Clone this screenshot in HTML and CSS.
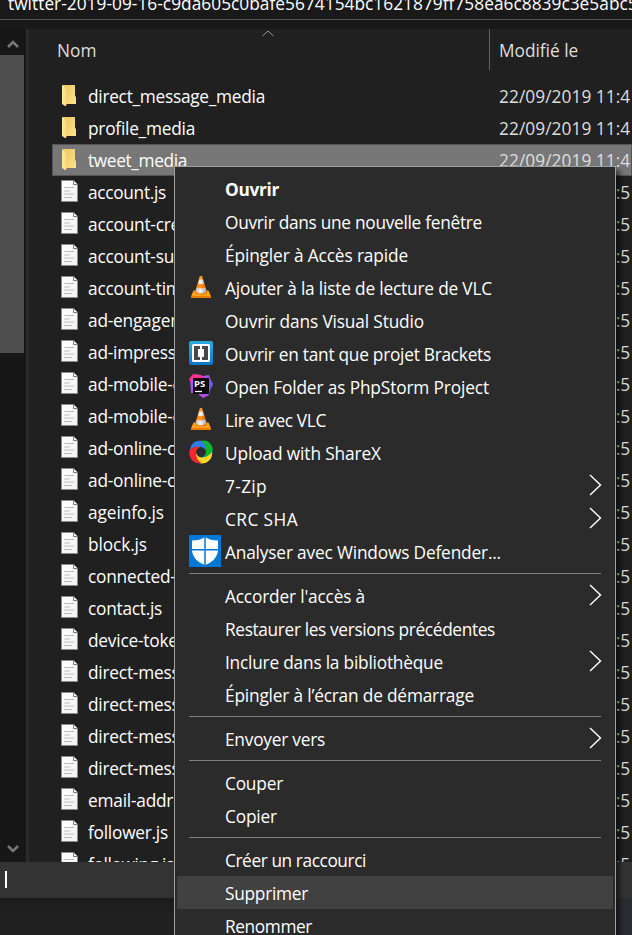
FILE: index.html
```
<!DOCTYPE html>
<html lang="fr">
<head>
<meta charset="utf-8">
<title>Explorateur</title>
<link rel="stylesheet" href="styles.css">
</head>
<body>
<svg class="defs" aria-hidden="true">
  <defs>
    <linearGradient id="gold" x1="0" x2="1" y1="0" y2="1"><stop offset="0" stop-color="#edc15d"/><stop offset="1" stop-color="#ffe68c"/></linearGradient>
    <linearGradient id="goldFront" x1="0" x2="1"><stop offset="0" stop-color="#ffe9a8"/><stop offset="1" stop-color="#f9d476"/></linearGradient>
    <linearGradient id="paper" x1="0" x2="1" y1="0" y2="1"><stop offset="0" stop-color="#fff"/><stop offset="1" stop-color="#f1f1f1"/></linearGradient>
    <linearGradient id="cone" x1="0" x2="1"><stop offset="0" stop-color="#e87808"/><stop offset=".45" stop-color="#ff9a28"/><stop offset="1" stop-color="#d95f00"/></linearGradient>
    <linearGradient id="band" x1="0" x2="1"><stop offset="0" stop-color="#b9b9b9"/><stop offset=".45" stop-color="#f4f4f4"/><stop offset="1" stop-color="#a9a9a9"/></linearGradient>
    <linearGradient id="sky" x1="0" x2="0" y1="0" y2="1"><stop offset="0" stop-color="#2bace2"/><stop offset="1" stop-color="#0a78c2"/></linearGradient>
    <symbol id="folder" viewBox="0 0 16 22">
      <path d="M1 0H14V11L15 12V19H5V21L1 19Z" fill="url(#gold)"/>
      <path d="M1 1L5 2.5V12L6 13V18L5 21L4 21L1 18.5Z" fill="url(#goldFront)"/>
    </symbol>
    <symbol id="doc" viewBox="0 0 17 22">
      <path d="M.5.5H12.5L16.5 4.5V21.5H.5Z" fill="url(#paper)" stroke="#8c8c8c"/>
      <path d="M12.5.5V4.5H16.5" fill="#fff" stroke="#777"/>
      <path d="M3 7.5H13M3 11H9M3 14H13M3 17.5H11" stroke="#bdbdbd" stroke-width="1.2"/>
    </symbol>
    <symbol id="vlc" viewBox="0 0 24 24">
      <path d="M4.5 15.5H19.5L22 21.5Q22 23 21 23H3Q2 23 2 21.5Z" fill="#ffa31c"/>
      <path d="M2 21H22V22.5Q22 23 21 23H3Q2 23 2 22Z" fill="#ec7c00"/>
      <path d="M10.800 1.200Q12 .4 13.200 1.200L18 17Q17 19.500 12 19.500T6 17Z" fill="url(#cone)"/>
      <path d="M10.300 4.500H13.700L15 8.500Q12 9.700 9 8.500ZM7.700 12.500Q12 14.500 16.300 12.500L17.300 16Q16.500 18 12 18T6.700 16Z" fill="url(#band)"/>
    </symbol>
    <symbol id="brackets" viewBox="0 0 24 24">
      <rect width="24" height="24" rx="2" fill="url(#sky)"/>
      <rect x="3" y="3" width="18" height="18" rx="1.5" fill="#fff"/>
      <path d="M5 5H11V8H9V16H11V19H5ZM19 5H13V8H15V16H13V19H19Z" fill="#484848"/>
    </symbol>
    <symbol id="storm" viewBox="0 0 24 24">
      <path d="M1 5L6 0L14 2L20 1L21 6L24 10L21 16L20 21L14 24L9 20L2 19Z" fill="#b44df0"/>
      <path d="M0 5L4 0L12 1L14 4H4L2 9Z" fill="#ff318c"/>
      <path d="M20 2L24 10L20 18Z" fill="#7256f5"/>
      <rect x="4" y="4" width="16" height="16" fill="#080808"/>
      <text class="storm-text" x="5" y="12.5">PS</text>
      <path d="M6 17.500H13" stroke="#fff" stroke-width="1.300"/>
    </symbol>
    <symbol id="sharex" viewBox="0 0 24 24">
      <circle cx="12" cy="12" r="8.200" fill="none" stroke="#3279eb" stroke-width="6"/>
      <path d="M12 1A9 9 0 0 1 22.500 14Q19 20 13 17.500Q17 16 17 11Q16 5 12 1Z" fill="#10b52d"/>
      <path d="M23 12A10 10 0 0 1 9 22.500Q5 19 7 13Q9 18 14 17.500Q19 17 23 12Z" fill="#ffd526"/>
      <path d="M12 23A10 10 0 0 1 1 9.500Q5 5 11 7Q7 9 7 13Q7 19 12 23Z" fill="#f3262b"/>
      <path d="M1.200 9A9 9 0 0 1 12 1Q16 3 17 8L16.500 10Q14 6.500 9.500 6.500Q4 6.500 1.200 9Z" fill="#3279eb"/>
    </symbol>
    <symbol id="shield" viewBox="0 0 32 32">
      <rect width="32" height="32" fill="#0078d7"/>
      <path d="M16 2Q21 5.500 29 5.500V14Q29 25 16 30Q3 25 3 14V5.500Q11 5.500 16 2Z" fill="#fff"/>
      <path d="M16 1V31M2 14.800H30" stroke="#0078d7" stroke-width="1.500"/>
    </symbol>
    <symbol id="chev" viewBox="0 0 13 22"><path d="M1 1L11.500 11L1 21" fill="none" stroke="#fff" stroke-width="1.400"/></symbol>
  </defs>
</svg>
<div class="window">
  <header class="title">twitter-2019-09-16-c9da605c0bafe5674154bc1621879ff758ea6c8839c3e5abc5</header>
  <main class="body">
    <aside class="scroll">
      <svg class="arrow" viewBox="0 0 12 10"><path d="M1 8L6 3L11 8" /></svg>
      <div class="thumb"></div>
      <svg class="arrow down" viewBox="0 0 12 10"><path d="M1 2L6 7L11 2" /></svg>
    </aside>
    <section class="pane">
      <div class="columns">
        <div class="col-name">Nom<svg class="sort" viewBox="0 0 12 7"><path d="M.5 6L6 1L11.500 6"/></svg></div>
        <div class="col-date">Modifié le</div>
      </div>
      <div class="rows" id="rows"></div>
    </section>
  </main>
  <div class="status"><i class="caret"></i></div>
  <div class="below"></div>
</div>
<nav class="menu" id="menu"></nav>
<script src="app.js"></script>
</body>
</html>
```
FILE: styles.css
```
* { box-sizing: border-box; }
body { margin: 0; width: 632px; height: 935px; overflow: hidden; background: #191919; color: #fff; font: 17.3px/32px "Open Sans", "Noto Sans", sans-serif; white-space: nowrap; }
.defs { position: absolute; width: 0; height: 0; }
.window { display: flex; flex-direction: column; height: 935px; }
.title { height: 20px; padding-left: 8px; overflow: hidden; border-bottom: 1px solid #555; line-height: 8px; letter-spacing: .03px; }
.body { display: flex; height: 842px; padding-top: 9px; overflow: hidden; }
.scroll { display: flex; flex-direction: column; flex: none; width: 26px; background: #171717; }
.thumb { width: 24px; height: 298px; background: #4d4d4d; }
.arrow { width: 12px; height: 10px; margin: 10px 0 6px 7px; fill: none; stroke: #777; stroke-width: 2.5; }
.down { margin-top: auto; margin-bottom: 8px; }
.pane { flex: 1; min-width: 0; border-left: 3px solid #2b2b2b; background: #202020; }
.columns { display: flex; height: 51px; color: #dedede; line-height: 43px; }
.col-name { position: relative; flex: none; width: 460px; padding-left: 28px; }
.sort { position: absolute; left: 233px; top: 1px; width: 12px; height: 7px; fill: none; stroke: #999; }
.col-date { height: 41px; padding-left: 9px; border-left: 1px solid #636363; }
.row { display: flex; height: 32px; margin-left: 23px; padding-left: 9px; line-height: 34px; }
.row.selected { background: #777; box-shadow: inset 0 0 0 1px #555; }
.row-icon { flex: none; width: 17px; height: 22px; margin-top: 4px; }
.row-icon.folder { width: 16px; margin-top: 5px; }
.name { flex: none; width: 421px; padding-left: 10px; }
.name span:not([data-width]) { letter-spacing: -.22px; }
.folder + .name { padding-left: 11px; width: 422px; }
.date { color: #dedede; letter-spacing: .06px; }
.status { height: 36px; padding: 9px 5px; background: #333; }
.caret { display: block; width: 2px; height: 17px; background: #fff; }
.below { flex: 1; background: linear-gradient(#1b1b1b, #202020 16px); box-shadow: inset -18px 0 #2b2c31; }
.menu { position: absolute; left: 174px; top: 166px; width: 442px; height: 790px; padding: 5px 2px; border: 1px solid #a0a0a0; background: #2b2b2b; box-shadow: 4px 4px 5px #0008; }
.item { display: flex; align-items: center; height: 33px; line-height: 33px; }
.item.hover { background: #414141; }
.item.bold { font-weight: 700; }
.slot { display: flex; flex: none; width: 48px; padding-left: 12px; }
.slot svg { width: 24px; height: 24px; margin-top: -1px; }
.slot .shield { width: 32px; height: 32px; margin-top: -1px; }
.label { flex: 1; padding-top: 2px; }
.chev { width: 13px; height: 22px; margin: -2px 11px 0 0; }
.sep { height: 11px; padding: 5px 12px; }
.sep i { display: block; height: 1px; background: #808080; }
.storm-text { font: 700 9.5px "Open Sans", sans-serif; fill: #fff; }
```
FILE: app.js
```
const icon = (id, cls) => `<svg class="${cls}"><use href="#${id}"/></svg>`;
const fitted = (text, width) => `<span${width ? ` data-width="${width}"` : ""}>${text}</span>`;

// name, text width
const files = [
  ["direct_message_media", 177], ["profile_media", 107], ["tweet_media", 99], ["account.js", 78],
  ["account-creation-ip.js"], ["account-suspension.js"], ["account-timezone.js"], ["ad-engagements.js"],
  ["ad-impressions.js"], ["ad-mobile-conversions-attributed.js"], ["ad-mobile-conversions-unattributed.js"],
  ["ad-online-conversions-attributed.js"], ["ad-online-conversions-unattributed.js"], ["ageinfo.js", 76],
  ["block.js", 59], ["connected-application.js"], ["contact.js", 74], ["device-token.js"],
  ["direct-message.js"], ["direct-message-group.js"], ["direct-message-headers.js"],
  ["direct-message-group-headers.js"], ["email-address-change.js"], ["follower.js", 80], ["following.js", 86]
];
document.getElementById("rows").innerHTML = files.map(([name, width], i) => {
  const kind = i < 3 ? "folder" : "doc";
  return `<div class="row${i === 2 ? " selected" : ""}">${icon(kind, "row-icon " + kind)}<span class="name">${fitted(name, width)}</span><span class="date">22/09/2019 ${i < 3 ? "11:4" : "06:5"}</span></div>`;
}).join("");

// label, text width, icon, modifier
const items = [
  ["Ouvrir", 54, "", "bold"], ["Ouvrir dans une nouvelle fenêtre", 257], ["Épingler à Accès rapide", 183],
  ["Ajouter à la liste de lecture de VLC", 267, "vlc"], ["Ouvrir dans Visual Studio", 199],
  ["Ouvrir en tant que projet Brackets", 266, "brackets"], ["Open Folder as PhpStorm Project", 264, "storm"],
  ["Lire avec VLC", 101, "vlc"], ["Upload with ShareX", 156, "sharex"], ["7-Zip", 42, "", "sub"], ["CRC SHA", 73, "", "sub"],
  ["Analyser avec Windows Defender...", 276, "shield"], null,
  ["Accorder l'accès à", 140, "", "sub"], ["Restaurer les versions précédentes", 270],
  ["Inclure dans la bibliothèque", 218, "", "sub"], ["Épingler à l’écran de démarrage", 249], null,
  ["Envoyer vers", 100, "", "sub"], null, ["Couper", 58], ["Copier", 52], null,
  ["Créer un raccourci", 141], ["Supprimer", 83, "", "hover"], ["Renommer", 87]
];
document.getElementById("menu").innerHTML = items.map(item => {
  if (!item) return '<div class="sep"><i></i></div>';
  const [label, width, id = "", mod = ""] = item;
  return `<div class="item ${mod}"><span class="slot">${id ? icon(id, id) : ""}</span><span class="label">${fitted(label, width)}</span>${mod === "sub" ? icon("chev", "chev") : ""}</div>`;
}).join("");

// Spread each label's letters so that it takes its set width.
document.querySelectorAll("[data-width]").forEach(el => {
  const gap = (el.dataset.width - el.getBoundingClientRect().width) / el.textContent.length;
  el.style.letterSpacing = gap.toFixed(3) + "px";
});
```
